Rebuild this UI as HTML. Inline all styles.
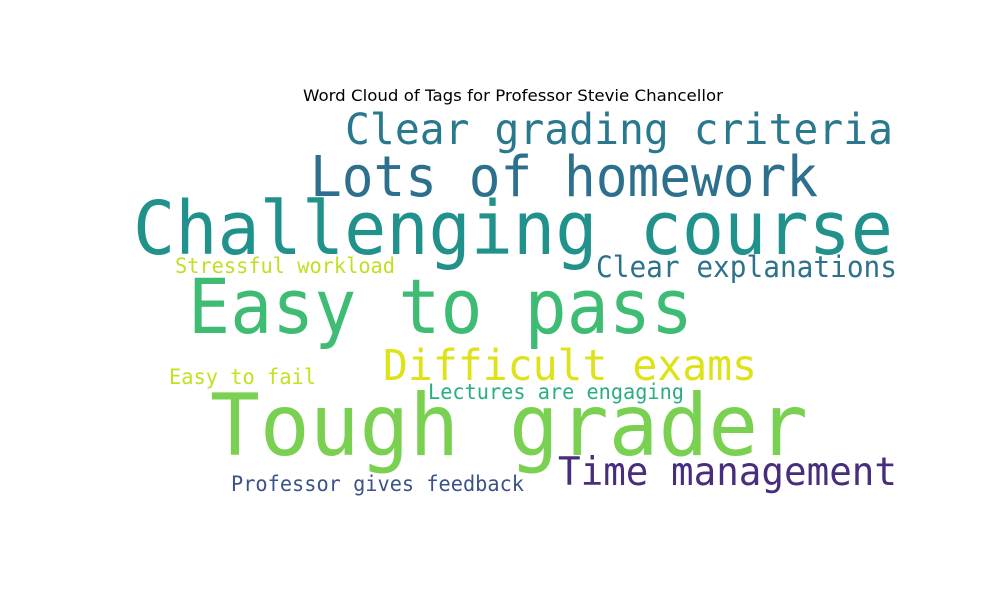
<!DOCTYPE html>
<html><head><meta charset="utf-8"><style>
html,body{margin:0;padding:0;background:#fff;width:1000px;height:600px;overflow:hidden}
svg{display:block}
text.w{font-family:"DejaVu Sans Mono","Liberation Mono",monospace}
</style></head><body>
<svg width="1000" height="600" viewBox="0 0 1000 600">
<rect width="1000" height="600" fill="#fff"/>
<text x="513" y="101" text-anchor="middle" font-family="DejaVu Sans, Liberation Sans, sans-serif" font-size="16" textLength="420" lengthAdjust="spacingAndGlyphs" fill="#000">Word Cloud of Tags for Professor Stevie Chancellor</text>
<g>
<text class="w" x="345" y="144" font-size="43" textLength="548" lengthAdjust="spacingAndGlyphs" fill="#2a788e">Clear grading criteria</text>
<text class="w" x="310" y="196" font-size="56" textLength="508" lengthAdjust="spacingAndGlyphs" fill="#2d708e">Lots of homework</text>
<text class="w" x="133" y="254" font-size="74" textLength="760" lengthAdjust="spacingAndGlyphs" fill="#21918c">Challenging course</text>
<text class="w" x="175" y="273" font-size="21" textLength="220" lengthAdjust="spacingAndGlyphs" fill="#c2df23">Stressful workload</text>
<text class="w" x="596" y="277" font-size="29" textLength="301" lengthAdjust="spacingAndGlyphs" fill="#2c728e">Clear explanations</text>
<text class="w" x="188" y="333" font-size="76" textLength="505" lengthAdjust="spacingAndGlyphs" fill="#3fbc73">Easy to pass</text>
<text class="w" x="383" y="380" font-size="43" textLength="374" lengthAdjust="spacingAndGlyphs" fill="#dde318">Difficult exams</text>
<text class="w" x="169" y="384" font-size="21" textLength="147" lengthAdjust="spacingAndGlyphs" fill="#c5e021">Easy to fail</text>
<text class="w" x="428" y="399" font-size="21" textLength="256" lengthAdjust="spacingAndGlyphs" fill="#29af7f">Lectures are engaging</text>
<text class="w" x="210" y="455" font-size="86" textLength="598" lengthAdjust="spacingAndGlyphs" fill="#7ad151">Tough grader</text>
<text class="w" x="558" y="485" font-size="39" textLength="339" lengthAdjust="spacingAndGlyphs" fill="#472d7b">Time management</text>
<text class="w" x="231" y="491" font-size="21" textLength="293" lengthAdjust="spacingAndGlyphs" fill="#3b528b">Professor gives feedback</text>
</g>
</svg>
</body></html>
